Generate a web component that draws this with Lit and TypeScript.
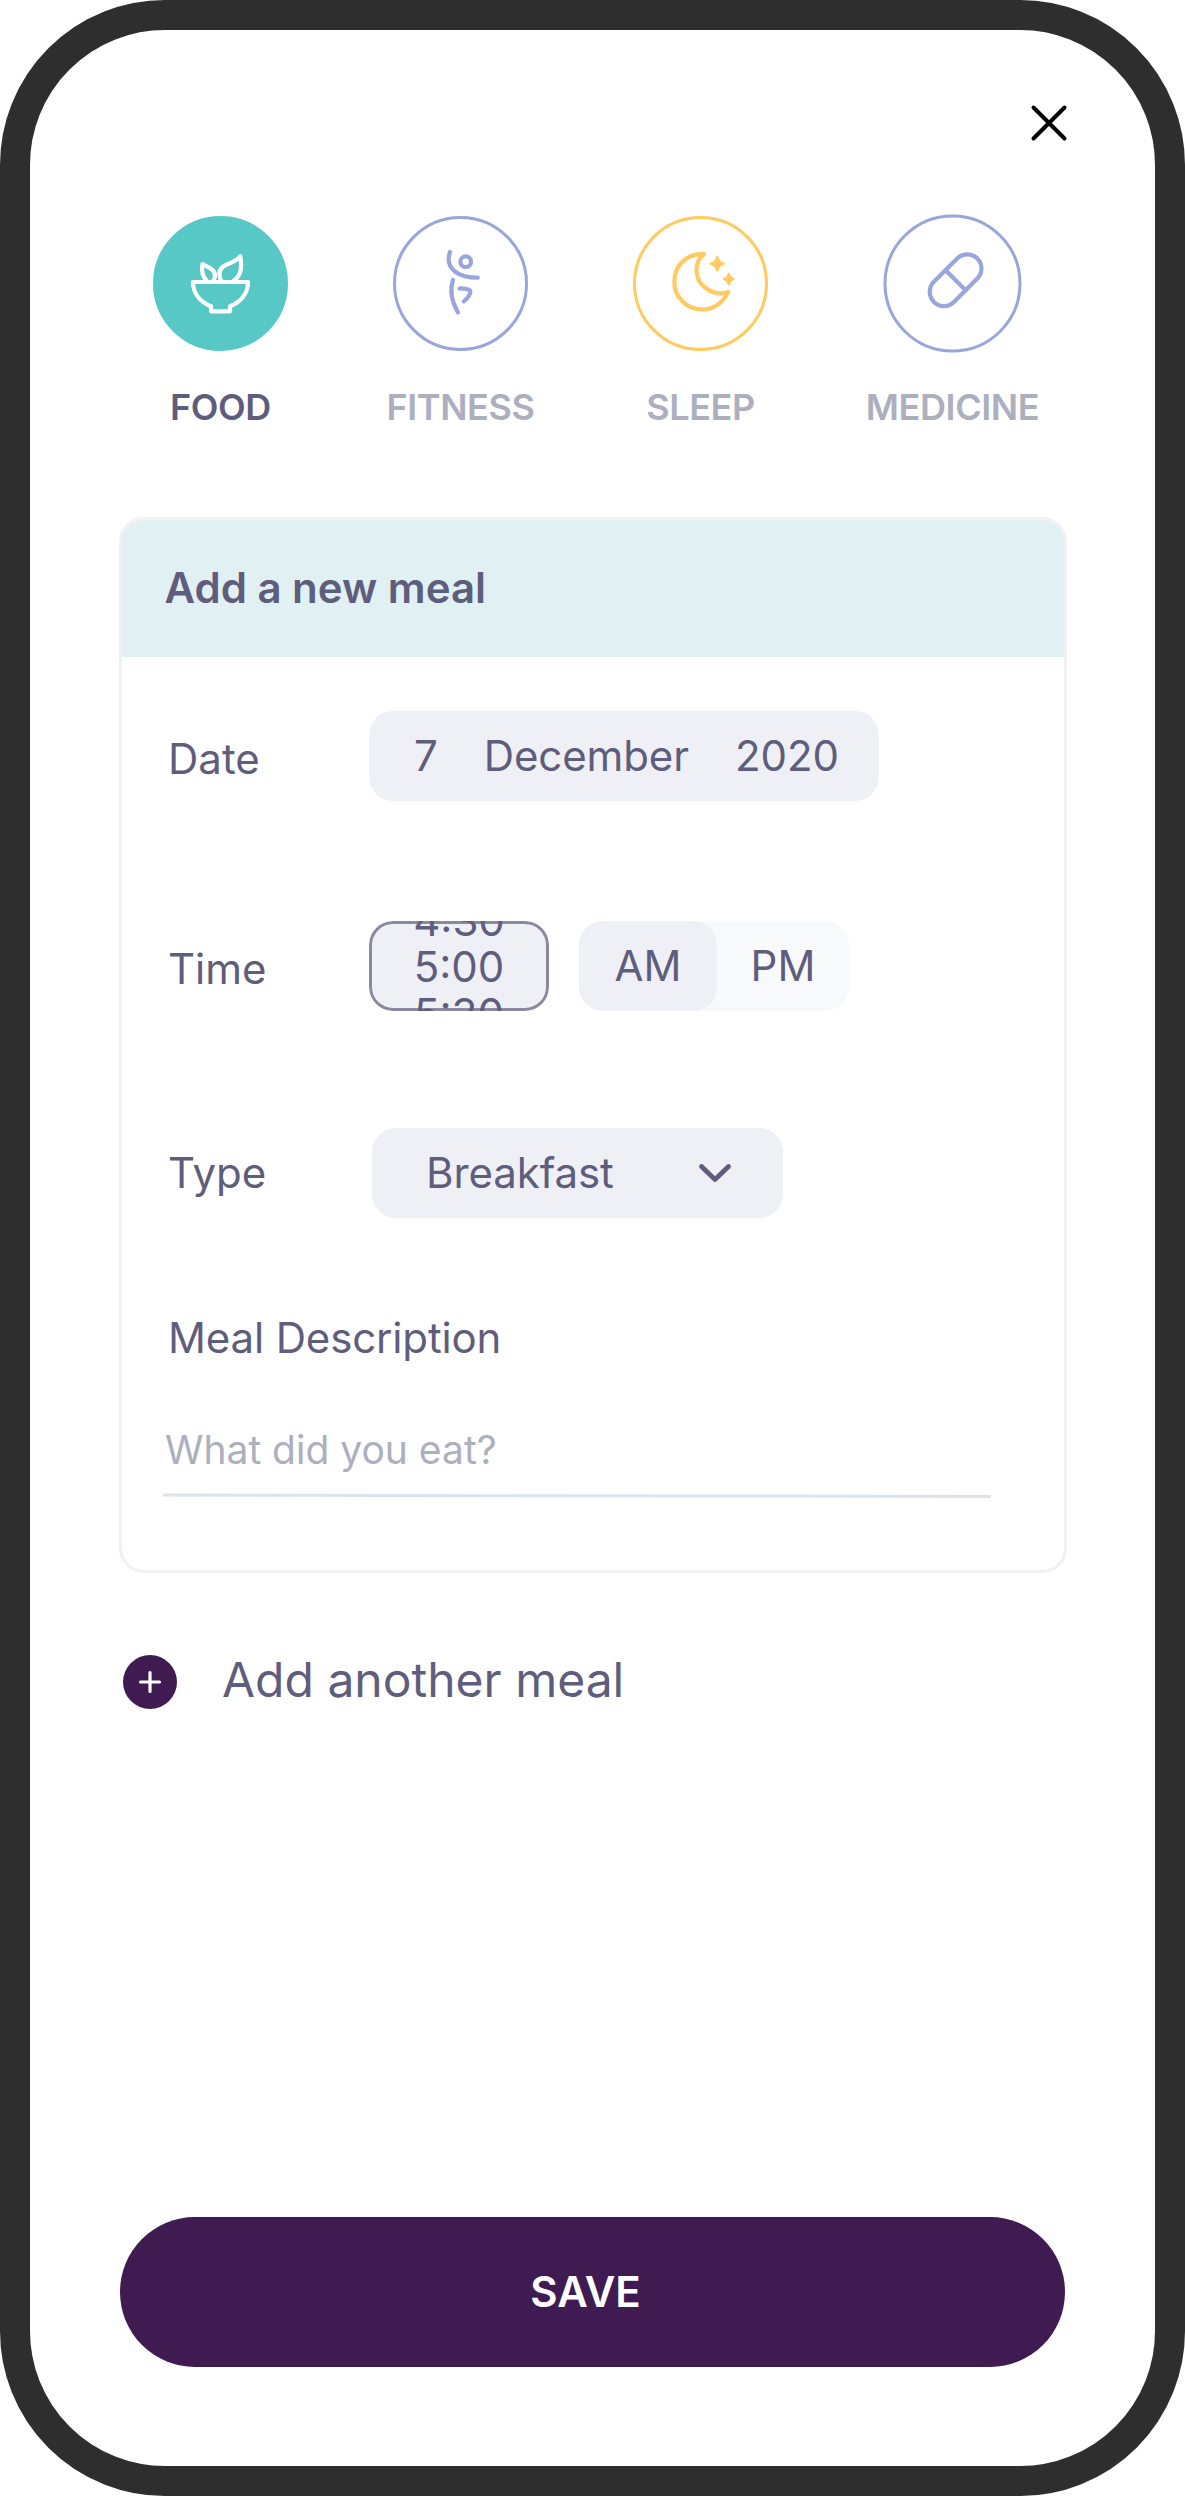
import { LitElement, html, css, svg } from "lit";
import { customElement, state } from "lit/decorators.js";
import { classMap } from "lit/directives/class-map.js";

const icons = {
  food: svg`
    <path d="M40 66h55c0 11.500-7.500 20-18 24.300v5H58v-5C47.500 86 40 77.500 40 66z"/>
    <path d="M53.500 64.500C49.500 60.500 48.300 54.500 49.500 48 54 51 62 52.500 62 60c0 2-.8 3.500-2 4.500"/>
    <path d="M68 64.500C64.500 56 67 51.500 73 49 79 46.500 84 44.500 87.300 40.200 89 51 88.500 59 81 64.500"/>`,
  fitness: svg`
    <path d="M57 36c-3 8.500-.5 15.500 5.500 20 6 4.300 13.500 5.700 22.300 5.700"/>
    <circle cx="72.700" cy="45.700" r="5.300"/>
    <path d="M60 64c-4 12-1 22 5 32.500"/>
    <path d="M66.500 72.500c4.500-.4 8 .3 10.800 2.300 .2 3.500-2.300 7-6.500 10.500"/>`,
  sleep: svg`
    <path d="M71 38.200C60 47 62 64 72 71.500c7 5.500 15.500 7 23 4.500C90.500 86.500 80 93.500 69 93.500A27.700 27.700 0 0 1 41.300 65.700C41.300 50 53.500 37 71 38.200z"/>
    <path class="solid" d="M84.300 41.200q1.500 6 6.500 6.500-5 .5-6.500 6.500-1.500-6-6.500-6.500 5-.5 6.500-6.500zM95.800 58q1 4.500 4.700 5-3.700 .5-4.700 5-1-4.500-4.700-5 3.700-.5 4.700-5z"/>`,
  medicine: svg`
    <g transform="rotate(-45 70.600 64.200)">
      <rect x="39.900" y="50" width="61.400" height="28.400" rx="14.200"/>
      <path d="M70.600 50v28.400"/>
    </g>`,
};

type Category = keyof typeof icons;

@customElement("category-tab")
class CategoryTab extends LitElement {
  static properties = {
    kind: { type: String, reflect: true },
    active: { type: Boolean, reflect: true },
  };
  declare kind: Category;
  declare active: boolean;

  static styles = css`
    :host { display: flex; flex-direction: column; align-items: center; }
    .disc { width: 135px; height: 135px; margin-bottom: 34px; overflow: visible; }
    .ring { fill: none; stroke: var(--tone); stroke-width: 3; }
    .glyph { fill: none; stroke: var(--tone); stroke-width: 4.200; stroke-linecap: round; stroke-linejoin: round; }
    .solid { fill: var(--tone); stroke-width: 2.6; }
    .label { font-size: 36px; line-height: 44px; font-weight: 600; letter-spacing: -0.4px; color: #adafbf; white-space: nowrap; }
    :host([active]) .ring { fill: var(--tone); }
    :host([active]) .glyph { stroke: #fff; }
    :host([active]) .label { color: #5f5d7c; }
  `;

  render() {
    const r = this.kind === "medicine" ? 67.5 : 66;
    return html`
      <svg class="disc" viewBox="0 0 135 135">
        <circle class="ring" cx="67.500" cy="67.500" r=${r}></circle>
        <g class="glyph">${icons[this.kind]}</g>
      </svg>
      <span class="label">${this.kind.toUpperCase()}</span>
    `;
  }
}

const tones: Record<Category, string> = {
  food: "#58c8c7",
  fitness: "#98a6dc",
  sleep: "#ffcb61",
  medicine: "#98a6dc",
};

@customElement("app-root")
export class AppRoot extends LitElement {
  @state() private current: Category = "food";
  @state() private period = "AM";

  static styles = css`
    :host { display: block; font-family: Inter, "Liberation Sans", sans-serif; color: #5f5d7c; }
    * { box-sizing: border-box; }
    .phone { width: 1185px; height: 2496px; border: 30px solid #2e2e2e; border-radius: 165px; background: #fff; display: flex; flex-direction: column; padding: 72px 90px 99px 88.5px; }
    .top { display: flex; justify-content: flex-end; height: 114px; }
    .close { width: 42px; height: 42px; margin-right: -5px; fill: none; stroke: #000; stroke-width: 4; stroke-linecap: round; }
    .tabs { display: grid; grid-template-columns: 240px 240px 240px 264px; margin-left: -18px; margin-right: -20px; height: 301px; }
    .card { width: 948px; height: 1056px; border: 3px solid #f0f0f6; border-radius: 25px; overflow: hidden; flex: none; }
    .head { height: 139px; margin: -2px -1px 0; padding-left: 44px; background: #e0f0f3; font-size: 42px; font-weight: 600; line-height: 140px; }
    .body { display: flex; flex-direction: column; padding-left: 46.500px; font-size: 42px; }
    .row { display: flex; height: 90px; align-items: center; }
    .row.date-row { margin-top: 54px; }
    .row.time-row { margin-top: 120px; }
    .row.type-row { margin-top: 117px; }
    .name { width: 201px; line-height: 90px; }
    .low { padding-top: 6px; }
    .field { height: 90px; border-radius: 24px; background: #eff0f6; line-height: 90px; display: flex; white-space: pre; }
    .date { width: 510px; padding-left: 45px; gap: 46px; letter-spacing: -0.1px; }
    .wheel { width: 180px; flex-direction: column; align-items: center; line-height: 46px; overflow: hidden; position: relative; margin-right: 30px; }
    .wheel span { flex: none; }
    .wheel span:first-child { margin-top: -23.500px; }
    .wheel span:last-child { margin-top: 1.500px; }
    .wheel::after { content: ""; position: absolute; inset: 0; border: 3px solid #5f5d7cb3; border-radius: 24px; }
    .period { width: 270px; background: #f7f9fb; }
    .half { width: 132px; text-align: center; border-radius: 24px; }
    .half.on { width: 138px; background: #eff0f6; }
    .type { width: 411px; margin-left: 3px; padding: 0 51px 0 54px; justify-content: space-between; align-items: center; letter-spacing: -0.1px; }
    .chevron { width: 34px; height: 20px; fill: none; stroke: #5f5d7c; stroke-width: 4.800; stroke-linecap: round; stroke-linejoin: round; }
    .title { margin-top: 94px; line-height: 52px; letter-spacing: -0.15px; }
    .entry { margin: 62px 0 19px -5px; width: 827px; font-size: 39px; line-height: 48px; color: #adafbf; padding-left: 2px; }
    .rule { display: block; width: 828px; height: 6px; margin-left: -5px; fill: none; stroke: #d8e6ec; stroke-width: 3; }
    .more { display: flex; align-items: center; height: 58px; margin-top: 80px; padding-left: 4.500px; gap: 45px; font-size: 48px; line-height: 58px; }
    .more-text { margin-top: -4px; }
    .plus { width: 54px; height: 54px; }
    .plus circle { fill: #401b52; }
    .plus path { stroke: #fff; stroke-width: 3.200; stroke-linecap: round; }
    .save { margin-top: auto; margin-left: 1.500px; width: 945px; height: 150px; border: 0; border-radius: 75px; background: #401b52; color: #fff; font: 600 42px/150px Inter, sans-serif; padding: 0 14px 0 0; }
  `;

  render() {
    return html`
      <main class="phone">
        <div class="top">
          <svg class="close" viewBox="0 0 42 42"><path d="M5.500 5.500 36.500 36.500M36.500 5.500 5.500 36.500"/></svg>
        </div>
        <nav class="tabs">
          ${(Object.keys(tones) as Category[]).map((kind) => html`
            <category-tab
              kind=${kind}
              ?active=${kind === this.current}
              style="--tone:${tones[kind]}"
              @click=${() => (this.current = kind)}
            ></category-tab>`)}
        </nav>
        <section class="card">
          <div class="head">Add a new meal</div>
          <div class="body">
            <div class="row date-row">
              <span class="name low">Date</span>
              <div class="field date"><span>7</span><span>December</span><span>2020</span></div>
            </div>
            <div class="row time-row">
              <span class="name low">Time</span>
              <div class="field wheel"><span>4:30</span><span>5:00</span><span>5:30</span></div>
              <div class="field period">
                ${["AM", "PM"].map((p) => html`
                  <span class=${classMap({ half: true, on: p === this.period })} @click=${() => (this.period = p)}>${p}</span>`)}
              </div>
            </div>
            <div class="row type-row">
              <span class="name">Type</span>
              <div class="field type">
                <span>Breakfast</span>
                <svg class="chevron" viewBox="0 0 34 20"><path d="M3.500 3.500 17 16.500 30.500 3.500"/></svg>
              </div>
            </div>
            <span class="title">Meal Description</span>
            <div class="entry">What did you eat?</div>
            <svg class="rule" viewBox="0 0 828 6"><path d="M0 2 828 3.500"/></svg>
          </div>
        </section>
        <div class="more">
          <svg class="plus" viewBox="0 0 54 54"><circle cx="27" cy="27" r="27"/><path d="M17.500 27h19M27 17.500v19"/></svg>
          <span class="more-text">Add another meal</span>
        </div>
        <button class="save">SAVE</button>
      </main>
    `;
  }
}
